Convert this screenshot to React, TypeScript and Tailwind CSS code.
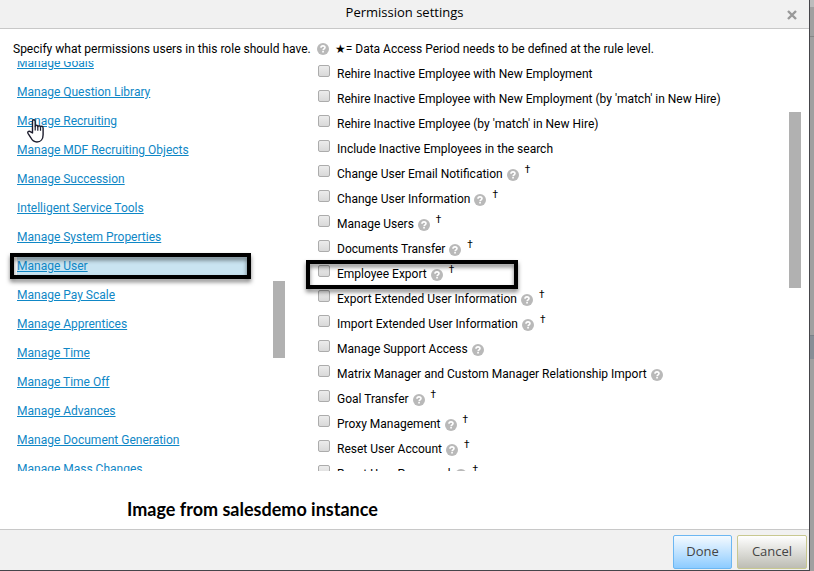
import React from 'react';

interface Permission {
  label: string;
  help?: boolean;
  dagger?: boolean;
  marked?: boolean;
}

const categories = [
  'Manage Goals',
  'Manage Question Library',
  'Manage Recruiting',
  'Manage MDF Recruiting Objects',
  'Manage Succession',
  'Intelligent Service Tools',
  'Manage System Properties',
  'Manage User',
  'Manage Pay Scale',
  'Manage Apprentices',
  'Manage Time',
  'Manage Time Off',
  'Manage Advances',
  'Manage Document Generation',
  'Manage Mass Changes',
];

const permissions: Permission[] = [
  { label: 'Rehire Inactive Employee with New Employment' },
  { label: "Rehire Inactive Employee with New Employment (by 'match' in New Hire)" },
  { label: "Rehire Inactive Employee (by 'match' in New Hire)" },
  { label: 'Include Inactive Employees in the search' },
  { label: 'Change User Email Notification', help: true, dagger: true },
  { label: 'Change User Information', help: true, dagger: true },
  { label: 'Manage Users', help: true, dagger: true },
  { label: 'Documents Transfer', help: true, dagger: true },
  { label: 'Employee Export', help: true, dagger: true, marked: true },
  { label: 'Export Extended User Information', help: true, dagger: true },
  { label: 'Import Extended User Information', help: true, dagger: true },
  { label: 'Manage Support Access', help: true },
  { label: 'Matrix Manager and Custom Manager Relationship Import', help: true },
  { label: 'Goal Transfer', help: true, dagger: true },
  { label: 'Proxy Management', help: true, dagger: true },
  { label: 'Reset User Account', help: true, dagger: true },
  { label: 'Reset User Password', help: true, dagger: true },
];

const HelpIcon = () => (
  <svg className="h-3 w-3 shrink-0" viewBox="0 0 12 12" aria-hidden="true">
    <circle cx="6" cy="6" r="6" fill="#b9b9b9" />
    <path
      d="M4 4.8C4 3.5 4.8 2.9 6 2.9s2 .7 2 1.7c0 1.2-1.9 1.3-1.9 2.6"
      fill="none"
      stroke="#fff"
      strokeWidth="1.6"
    />
    <rect x="5.2" y="8" width="1.7" height="1.5" fill="#fff" />
  </svg>
);

const HandCursor = () => (
  <svg
    className="pointer-events-none absolute top-2.5 left-2.5 z-10 h-6 w-[18px]"
    viewBox="0 0 18 24"
    aria-hidden="true"
  >
    <path
      d="M5.5 14V2.4C5.5 1.4 6 .8 6.8.8s1.4.6 1.4 1.6v5.2c.1-.9.6-1.3 1.3-1.3s1.2.5 1.3 1.4c.2-.7.7-1 1.3-1 .8 0 1.3.5 1.4 1.4.2-.5.6-.8 1.2-.8.9 0 1.4.6 1.4 1.6v6.8c0 4-2.2 7.3-6.2 7.3-3.3 0-4.8-1.7-6-4.2L1 14.3c-.4-.9-.2-1.6.5-1.9.8-.4 1.6-.1 2.2.5z"
      fill="#fff"
      stroke="#1c1c2c"
      strokeWidth="1.4"
      strokeLinejoin="round"
    />
    <path d="M8.2 7.5v4M10.8 7.7v4M13.5 8.2v3.6" stroke="#1c1c2c" strokeWidth="1.2" />
  </svg>
);

const CategoryLink = ({ name }: { name: string }) => {
  const selected = name === 'Manage User';

  return (
    <li className={`relative h-6 ${selected ? 'bg-[#c9e4f1]' : ''}`}>
      <a href="#" className="block leading-6 text-[#0f87c6] underline underline-offset-1">
        {name}
      </a>
      {name === 'Manage Recruiting' && <HandCursor />}
      {selected && (
        <div className="pointer-events-none absolute -inset-y-px -right-1 -left-[7px] border-4 border-black drop-shadow-[0_3px_2px_rgba(0,0,0,0.5)]" />
      )}
    </li>
  );
};

const PermissionRow = ({ item }: { item: Permission }) => (
  <li className="relative h-[25px]">
    <label className="flex h-full items-center">
      <input
        type="checkbox"
        className="mr-[7px] mb-1.5 h-3 w-3 shrink-0 appearance-none rounded-xs border border-[#acacac] bg-linear-to-b from-[#ececec] to-[#d9d9d9]"
      />
      <span className="whitespace-nowrap">{item.label}</span>
      {item.help && (
        <span className="mt-0.5 ml-1">
          <HelpIcon />
        </span>
      )}
      {item.dagger && <span className="mb-2 ml-1.5 text-[10px] leading-3">†</span>}
    </label>
    {item.marked && (
      <div className="pointer-events-none absolute -top-px -bottom-[3px] -left-3 z-10 w-[212px] border-4 border-black drop-shadow-[0_3px_2px_rgba(0,0,0,0.5)]" />
    )}
  </li>
);

export default function App() {
  return (
    <div className="flex min-h-screen bg-[#a0a0a0] font-[Roboto,sans-serif] text-xs text-black">
      <div
        role="dialog"
        aria-labelledby="dialog-title"
        className="flex min-w-0 flex-1 flex-col border-r border-b border-[#45454a] bg-white"
      >
        <header className="relative h-[29px] border-b border-[#c8c8c8] bg-[#f1f1f1] font-['Open_Sans',sans-serif]">
          <h1 id="dialog-title" className="text-center text-[13px] leading-6">
            Permission settings
          </h1>
          <button type="button" aria-label="Close" className="absolute top-2.5 right-3">
            <svg className="h-2.5 w-2.5" viewBox="0 0 10 10">
              <path d="M1 1l8 8M9 1L1 9" stroke="#999" strokeWidth="2.4" />
            </svg>
          </button>
        </header>

        <main className="flex-1">
          <div className="flex items-center pt-2.5 pl-[13px] leading-5 whitespace-nowrap">
            <span>Specify what permissions users in this role should have.</span>
            <span className="mx-1.5">
              <HelpIcon />
            </span>
            <span>★= Data Access Period needs to be defined at the rule level.</span>
          </div>

          <div className="mt-0.5 flex h-[410px]">
            <nav className="w-[273px] shrink-0 overflow-hidden pr-[26px] pl-[17px]">
              <ul className="-mt-2.5 space-y-[5px]">
                {categories.map((name) => (
                  <CategoryLink key={name} name={name} />
                ))}
              </ul>
            </nav>
            <div className="w-3 shrink-0">
              <div className="mt-[220px] h-[77px] bg-[#b1b1b1]" />
            </div>
            <ul className="min-w-0 flex-1 overflow-hidden pl-[33px]">
              {permissions.map((item) => (
                <PermissionRow key={item.label} item={item} />
              ))}
            </ul>
            <div className="mr-2 w-3 shrink-0">
              <div className="mt-[51px] h-44 bg-[#b1b1b1]" />
            </div>
          </div>

          <p className="mt-6 pl-[127px] font-[Lato,sans-serif] text-lg leading-7 font-bold">
            Image from salesdemo instance
          </p>
        </main>

        <footer className="flex h-[41px] justify-end gap-[5px] border-t border-[#c8c8c8] bg-[#f1f1f1] pt-[5px] pr-0.5 font-['Open_Sans',sans-serif] text-[13px] text-[#444]">
          <button
            type="button"
            className="h-[34px] w-[59px] rounded-xs border border-[#6cb7f2] bg-linear-to-b from-[#f4faff] to-[#8ccbff]"
          >
            Done
          </button>
          <button
            type="button"
            className="h-[34px] w-[70px] rounded-xs border border-[#c8c890] bg-linear-to-b from-white to-[#bdbdb4]"
          >
            Cancel
          </button>
        </footer>
      </div>

      {/* dimmed page behind the dialog */}
      <div className="w-1 shrink-0">
        <div className="h-[7px] bg-[#bcbcbc]" />
        <div className="h-[30px] border-b border-[#858585]" />
        <div className="mt-[298px] h-6 border-t border-[#7b8188] bg-[#878e96]" />
      </div>
    </div>
  );
}
